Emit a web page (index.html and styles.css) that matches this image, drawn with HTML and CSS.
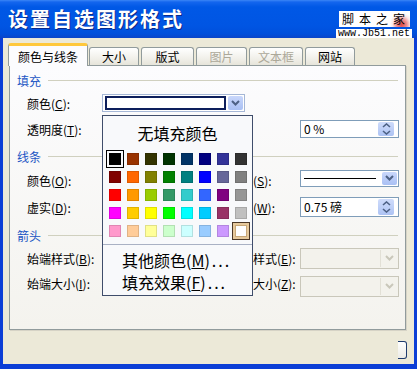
FILE: index.html
```html
<!DOCTYPE html>
<html lang="zh-CN">
<head>
<meta charset="utf-8">
<title>设置自选图形格式</title>
<link rel="stylesheet" href="styles.css">
</head>
<body>
<div class="window">
  <div class="titlebar">
    <span class="title">设置自选图形格式</span>
    <div class="mark">
      <div class="mark-cn">脚本之家</div>
      <div class="mark-url">www.Jb51.net</div>
    </div>
  </div>
  <div class="client">
    <div class="tabs">
      <div class="tab active t1">颜色与线条</div>
      <div class="tab t2">大小</div>
      <div class="tab t3">版式</div>
      <div class="tab disabled t4">图片</div>
      <div class="tab disabled t5">文本框</div>
      <div class="tab t6">网站</div>
    </div>
    <div class="panel">
      <div class="group g1"><span>填充</span></div>
      <div class="row h22">
        <span class="lbl">颜色(<u>C</u>):</span>
        <div class="fill-combo">
          <div class="fill-field"></div>
          <div class="cbtn"><svg width="9" height="6" viewBox="0 0 9 6"><path d="M1 1 L4.5 4.5 L8 1" fill="none" stroke="#4d6185" stroke-width="2"/></svg></div>
          <div class="dropdown">
            <div class="dd-title">无填充颜色</div>
            <div class="swatches">
              <div class="cell sel"><i class="sw" style="background:#000000"></i></div>
              <div class="cell"><i class="sw" style="background:#993300"></i></div>
              <div class="cell"><i class="sw" style="background:#333300"></i></div>
              <div class="cell"><i class="sw" style="background:#003300"></i></div>
              <div class="cell"><i class="sw" style="background:#003366"></i></div>
              <div class="cell"><i class="sw" style="background:#000080"></i></div>
              <div class="cell"><i class="sw" style="background:#333399"></i></div>
              <div class="cell"><i class="sw" style="background:#333333"></i></div>
              <div class="cell"><i class="sw" style="background:#800000"></i></div>
              <div class="cell"><i class="sw" style="background:#ff6600"></i></div>
              <div class="cell"><i class="sw" style="background:#808000"></i></div>
              <div class="cell"><i class="sw" style="background:#008000"></i></div>
              <div class="cell"><i class="sw" style="background:#008080"></i></div>
              <div class="cell"><i class="sw" style="background:#0000ff"></i></div>
              <div class="cell"><i class="sw" style="background:#666699"></i></div>
              <div class="cell"><i class="sw" style="background:#808080"></i></div>
              <div class="cell"><i class="sw" style="background:#ff0000"></i></div>
              <div class="cell"><i class="sw" style="background:#ff9900"></i></div>
              <div class="cell"><i class="sw" style="background:#99cc00"></i></div>
              <div class="cell"><i class="sw" style="background:#339966"></i></div>
              <div class="cell"><i class="sw" style="background:#33cccc"></i></div>
              <div class="cell"><i class="sw" style="background:#3366ff"></i></div>
              <div class="cell"><i class="sw" style="background:#800080"></i></div>
              <div class="cell"><i class="sw" style="background:#969696"></i></div>
              <div class="cell"><i class="sw" style="background:#ff00ff"></i></div>
              <div class="cell"><i class="sw" style="background:#ffcc00"></i></div>
              <div class="cell"><i class="sw" style="background:#ffff00"></i></div>
              <div class="cell"><i class="sw" style="background:#00ff00"></i></div>
              <div class="cell"><i class="sw" style="background:#00ffff"></i></div>
              <div class="cell"><i class="sw" style="background:#00ccff"></i></div>
              <div class="cell"><i class="sw" style="background:#993366"></i></div>
              <div class="cell"><i class="sw" style="background:#c0c0c0"></i></div>
              <div class="cell"><i class="sw" style="background:#ff99cc"></i></div>
              <div class="cell"><i class="sw" style="background:#ffcc99"></i></div>
              <div class="cell"><i class="sw" style="background:#ffff99"></i></div>
              <div class="cell"><i class="sw" style="background:#ccffcc"></i></div>
              <div class="cell"><i class="sw" style="background:#ccffff"></i></div>
              <div class="cell"><i class="sw" style="background:#99ccff"></i></div>
              <div class="cell"><i class="sw" style="background:#cc99ff"></i></div>
              <div class="cell hov"><i class="sw" style="background:#ffffff"></i></div>
            </div>
            <div class="sep"></div>
            <div class="dd-item">其他颜色(<u>M</u>)<span class="dots">...</span></div>
            <div class="dd-item">填充效果(<u>F</u>)<span class="dots">...</span></div>
          </div>
        </div>
      </div>
      <div class="row h30">
        <span class="lbl">透明度(<u>T</u>):</span>
        <div class="slot-wide"></div>
        <div class="spin">
          <span class="val">0 %</span>
          <div class="sbtn">
            <svg width="9" height="5" viewBox="0 0 9 5"><path d="M1 4 L4.5 1 L8 4" fill="none" stroke="#4d6185" stroke-width="1.6"/></svg>
            <svg width="9" height="5" viewBox="0 0 9 5"><path d="M1 1 L4.5 4 L8 1" fill="none" stroke="#4d6185" stroke-width="1.6"/></svg>
          </div>
        </div>
      </div>
      <div class="group g2"><span>线条</span></div>
      <div class="row h24">
        <span class="lbl">颜色(<u>O</u>):</span>
        <div class="lctl"><div class="combo small"></div></div>
        <span class="rlbl">线型(<u>S</u>):</span>
        <div class="combo line">
          <div class="line-field"><i class="stroke"></i></div>
          <div class="cbtn"><svg width="9" height="6" viewBox="0 0 9 6"><path d="M1 1 L4.5 4.5 L8 1" fill="none" stroke="#4d6185" stroke-width="2"/></svg></div>
        </div>
      </div>
      <div class="row h30">
        <span class="lbl">虚实(<u>D</u>):</span>
        <div class="lctl"><div class="combo small"></div></div>
        <span class="rlbl">粗细(<u>W</u>):</span>
        <div class="spin tall">
          <span class="val">0.75 磅</span>
          <div class="sbtn">
            <svg width="9" height="5" viewBox="0 0 9 5"><path d="M1 4 L4.5 1 L8 4" fill="none" stroke="#4d6185" stroke-width="1.6"/></svg>
            <svg width="9" height="5" viewBox="0 0 9 5"><path d="M1 1 L4.5 4 L8 1" fill="none" stroke="#4d6185" stroke-width="1.6"/></svg>
          </div>
        </div>
      </div>
      <div class="group g3"><span>箭头</span></div>
      <div class="row h20">
        <span class="lbl">始端样式(<u>B</u>):</span>
        <div class="lctl"><div class="combo small"></div></div>
        <span class="rlbl">末端样式(<u>E</u>):</span>
        <div class="dcombo">
          <div class="dfield"></div>
          <div class="dbtn"><svg width="9" height="6" viewBox="0 0 9 6"><path d="M1 1 L4.5 4.5 L8 1" fill="none" stroke="#c9c7ba" stroke-width="2"/></svg></div>
        </div>
      </div>
      <div class="row h30">
        <span class="lbl">始端大小(<u>I</u>):</span>
        <div class="lctl"><div class="combo small"></div></div>
        <span class="rlbl">末端大小(<u>Z</u>):</span>
        <div class="dcombo low">
          <div class="dfield"></div>
          <div class="dbtn"><svg width="9" height="6" viewBox="0 0 9 6"><path d="M1 1 L4.5 4.5 L8 1" fill="none" stroke="#c9c7ba" stroke-width="2"/></svg></div>
        </div>
      </div>
    </div>
    <div class="foot">
      <div class="stub"></div>
    </div>
  </div>
</div>
</body>
</html>
```

FILE: styles.css
```css
* { box-sizing: border-box; }
html, body { margin: 0; padding: 0; }
body {
  width: 417px;
  height: 369px;
  overflow: hidden;
  background: #0b3ed6;
  font-family: "Noto Sans CJK SC", "Liberation Sans", sans-serif;
  font-size: 12px;
  color: #000;
}
u { text-decoration: underline; text-underline-offset: 1px; }

.window {
  display: flex;
  flex-direction: column;
  width: 417px;
  height: 369px;
}

/* title bar */
.titlebar {
  flex: none;
  height: 38px;
  display: flex;
  justify-content: space-between;
  align-items: center;
  padding: 0 5px 0 8px;
  background: linear-gradient(#3b86f6 0, #1466ee 2px, #0058e6 7px, #0055e3 26px, #004fdb 34px, #0a45c9 38px);
}
.title {
  color: #fff;
  font-size: 20px;
  font-weight: 700;
  letter-spacing: 2px;
  line-height: 1;
  text-shadow: 1px 1px 0 #0b2a8a;
}
.mark {
  align-self: flex-start;
  margin-top: 11px;
  display: flex;
  flex-direction: column;
  align-items: flex-end;
  gap: 2px;
}
.mark-cn {
  width: 71px;
  height: 16px;
  margin-right: 2px;
  padding-left: 3px;
  font-size: 12px;
  line-height: 16px;
  letter-spacing: 5px;
  color: #000;
  white-space: nowrap;
  background: radial-gradient(circle at 88% 85%, #e04848 0, #ee8a8a 5px, #fbe6e6 9px, #fff 12px);
}
.mark-url {
  width: 76px;
  height: 9px;
  padding-left: 2px;
  font-family: "Liberation Mono", monospace;
  font-size: 10px;
  line-height: 9px;
  color: #000;
  background: #fff;
  white-space: nowrap;
}

/* client area */
.client {
  flex: 1;
  margin: 0 3px 5px;
  background: #ece9d8;
  display: flex;
  flex-direction: column;
}
.tabs {
  position: relative;
  z-index: 2;
  flex: none;
  height: 28px;
  padding: 5px 0 0 5px;
  display: flex;
  align-items: flex-end;
  gap: 2px;
}
.tab {
  height: 18px;
  margin-bottom: 1px;
  display: flex;
  align-items: center;
  justify-content: center;
  border: 1px solid #919b9c;
  border-bottom: none;
  border-radius: 3px 3px 0 0;
  background: linear-gradient(#ffffff, #f1f0ea 60%, #e6e4da);
  font-size: 12px;
  white-space: nowrap;
}
.tab.active {
  height: 23px;
  margin-bottom: 0;
  margin-right: -1px;
  border-top: 3px solid #ffc83c;
  background: #fcfcfe;
}
.tab.disabled { color: #aca899; }
.t1 { width: 80px; }
.t2 { width: 50px; }
.t3 { width: 53px; }
.t4 { width: 51px; }
.t5 { width: 54px; }
.t6 { width: 50px; }

.panel {
  position: relative;
  z-index: 1;
  flex: none;
  height: 265px;
  margin: -1px 8px 0 6px;
  padding: 2px 6px 0 7px;
  border: 1px solid #919b9c;
  background: linear-gradient(#fcfcfe, #f4f3ee);
  box-shadow: 1px 1px 0 #d6d3c6;
}

.group {
  display: flex;
  align-items: center;
  color: #2356c4;
  height: 24px;
}
.group::after {
  content: "";
  flex: 1;
  height: 1px;
  margin: 0 1px 0 7px;
  background: #d0d0bf;
}
.g3 { height: 26px; }

.row { display: flex; align-items: center; }
.h20 { height: 20px; }
.h22 { height: 22px; }
.h24 { height: 24px; }
.h30 { height: 30px; }

.lbl {
  flex: none;
  width: 86px;
  padding-left: 10px;
  white-space: nowrap;
}
.lctl { flex: none; width: 126px; }
.rlbl { flex: none; width: 71px; white-space: nowrap; }
.slot-wide { flex: none; width: 197px; }

/* fill colour combo */
.fill-combo {
  position: relative;
  flex: none;
  width: 143px;
  height: 18px;
  margin-left: -1px;
  padding: 1px 1px 1px 2px;
  display: flex;
  gap: 2px;
  border: 1px solid #a5b7d6;
  background: #fff;
}
.fill-field {
  flex: 1;
  border: 2px solid #0d1f5c;
  background: #fff;
}
.cbtn {
  flex: none;
  width: 15px;
  display: flex;
  align-items: center;
  justify-content: center;
  border-radius: 2px;
  background: linear-gradient(#c9d7fb, #a9c0f4);
}

.combo {
  display: flex;
  border: 1px solid #7f9db9;
  background: #fff;
}
.combo.small { width: 100px; height: 20px; }
.combo.line {
  flex: none;
  width: 99px;
  height: 17px;
  margin-bottom: 4px;
  padding: 1px;
  gap: 2px;
}
.line-field {
  flex: 1;
  display: flex;
  align-items: center;
  padding: 0 4px 0 2px;
}
.stroke { display: block; flex: 1; height: 1px; background: #000; }

.spin {
  flex: none;
  width: 99px;
  height: 18px;
  display: flex;
  align-items: center;
  padding: 1px;
  border: 1px solid #7f9db9;
  background: #fff;
}
.spin.tall { height: 20px; }
.spin .val { flex: 1; padding-left: 2px; line-height: 1; }
.sbtn {
  flex: none;
  width: 16px;
  height: 100%;
  margin-right: 3px;
  display: flex;
  flex-direction: column;
  align-items: center;
  justify-content: center;
  gap: 2px;
  border-radius: 2px;
  background: linear-gradient(#cfdcfb, #adc3f4);
}

.dcombo {
  flex: none;
  width: 99px;
  height: 21px;
  display: flex;
  border: 1px solid #c9c7ba;
  background: #f3f2ec;
  padding: 1px;
}
.dcombo.low { margin-top: 6px; }
.dfield { flex: 1; }
.dbtn {
  flex: none;
  width: 17px;
  display: flex;
  align-items: center;
  justify-content: center;
  border-left: 1px solid #e2e0d6;
}

/* dropdown palette */
.dropdown {
  position: absolute;
  top: 20px;
  left: -1px;
  z-index: 5;
  width: 151px;
  height: 181px;
  display: flex;
  flex-direction: column;
  padding-bottom: 2px;
  border: 1px solid #3f4d6b;
  background: #f8f9fb;
}
.dd-title {
  height: 34px;
  flex: none;
  display: flex;
  align-items: center;
  justify-content: center;
  font-size: 16px;
}
.swatches {
  display: grid;
  grid-template-columns: repeat(8, 18px);
  grid-auto-rows: 18px;
  padding-left: 3px;
}
.cell {
  display: flex;
  align-items: center;
  justify-content: center;
}
.sw {
  display: block;
  width: 12px;
  height: 12px;
  border: 1px solid rgba(0, 0, 0, 0.12);
}
.cell.sel { border: 1px solid #000; }
.cell.hov { border: 1px solid #4a3726; background: #e6c99c; }
.cell.hov .sw { border: 1px solid #c8a878; }
.sep {
  flex: none;
  height: 1px;
  margin-top: 4px;
  background: #a9b1c4;
}
.dd-item {
  flex: none;
  height: 22px;
  display: flex;
  align-items: center;
  padding-left: 19px;
  font-size: 16px;
  white-space: nowrap;
}
.sep + .dd-item { margin-top: 4px; }
.dots { letter-spacing: 2px; margin-left: 2px; }

.foot {
  flex: 1;
  display: flex;
  justify-content: flex-end;
  align-items: flex-start;
  padding: 11px 7px 0 0;
}
.stub {
  width: 9px;
  height: 18px;
  border: 1px solid #1f3b6e;
  border-left: none;
  border-radius: 0 3px 3px 0;
  background: linear-gradient(#ffffff, #ecebe6);
}
```
